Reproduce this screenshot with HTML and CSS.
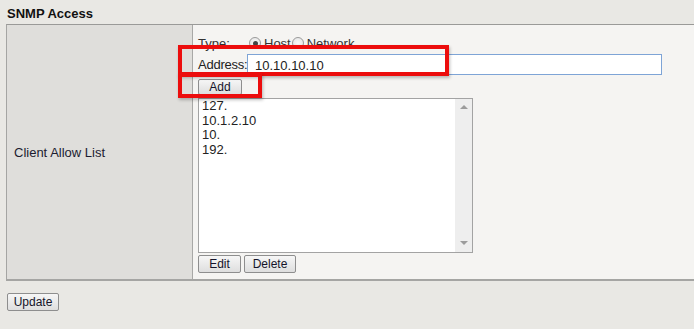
FILE: index.html
```html
<!DOCTYPE html>
<html>
<head>
<meta charset="utf-8">
<link rel="stylesheet" href="styles.css">
</head>
<body>
<div class="title">SNMP Access</div>
<div class="table">
  <div class="label-cell">Client Allow List</div>
  <div class="content-cell">
    <div class="type-row">
      <span class="type-label">Type:</span>
      <span class="radio checked"></span><span class="radio-text">Host</span>
      <span class="radio"></span><span class="radio-text">Network</span>
    </div>
    <div class="addr-row">
      <span class="addr-label">Address:</span>
      <div class="addr-input">10.10.10.10</div>
    </div>
    <div class="btn-row"><button class="btn btn-add">Add</button></div>
    <div class="listbox">
      <div class="list-items">
        <div>127.</div>
        <div>10.1.2.10</div>
        <div>10.</div>
        <div>192.</div>
      </div>
      <div class="scrollbar">
        <span class="arrow up"></span>
        <span class="arrow down"></span>
      </div>
    </div>
    <div class="btn-row gap">
      <button class="btn btn-edit">Edit</button>
      <button class="btn btn-delete">Delete</button>
    </div>
  </div>
</div>
<div class="footer"><button class="btn btn-update">Update</button></div>
<div class="mark mark-addr"></div>
<div class="mark mark-add"></div>
</body>
</html>
```

FILE: styles.css
```css
html, body {
  margin: 0;
  padding: 0;
}
body {
  background: #e9e8e4;
  font-family: "Liberation Sans", Arial, sans-serif;
  font-size: 13px;
  color: #1a1a2e;
  width: 694px;
  height: 329px;
  overflow: hidden;
  position: relative;
}
.title {
  font-weight: bold;
  font-size: 13px;
  color: #111;
  padding: 6px 0 0 7px;
  height: 18px;
  box-sizing: border-box;
}
.table {
  margin: 6px 0 0 6px;
  display: flex;
  border-top: 1px solid #9a9a98;
  border-bottom: 2px solid #a5a5a3;
  border-left: 1px solid #a5a5a3;
  width: 720px;
}
.label-cell {
  width: 186px;
  flex: none;
  box-sizing: border-box;
  background: #dfdedb;
  border-right: 1px solid #a8a8a6;
  display: flex;
  align-items: center;
  padding-left: 7px;
  color: #1c1c30;
}
.content-cell {
  flex: 1;
  background: #f5f4f2;
  padding: 9px 0 6px 5px;
}
.type-row {
  display: flex;
  align-items: center;
  height: 18px;
  color: #333;
}
.type-label {
  width: 51px;
  flex: none;
}
.radio {
  width: 12px;
  height: 12px;
  flex: none;
  border-radius: 50%;
  border: 1px solid #9a9a9a;
  background: radial-gradient(circle, #fafafa 0, #e2e2e2 100%);
  box-sizing: border-box;
  margin-right: 3px;
  position: relative;
}
.radio.checked::after {
  content: "";
  position: absolute;
  left: 2.5px;
  top: 2.5px;
  width: 5px;
  height: 5px;
  border-radius: 50%;
  background: #444;
}
.radio-text {
  margin-right: 1px;
}
.addr-row {
  display: flex;
  align-items: center;
  margin-top: 2px;
  height: 21px;
}
.addr-label {
  width: 49px;
  flex: none;
  white-space: nowrap;
  letter-spacing: -0.25px;
  color: #222;
}
.addr-input {
  width: 415px;
  flex: none;
  height: 21px;
  box-sizing: border-box;
  border: 1px solid #7ea4d6;
  background: #fff;
  padding: 3px 0 0 7px;
  color: #222;
}
.btn-row {
  display: flex;
  margin-top: 4px;
}
.btn-row.gap {
  margin-top: 2px;
  gap: 3px;
}
.btn {
  font-family: "Liberation Sans", Arial, sans-serif;
  font-size: 12px;
  color: #14142a;
  background: linear-gradient(#f6f6f6, #dedede);
  border: 1px solid #8e8e8e;
  border-radius: 2px;
  padding: 0;
  margin: 0;
  box-sizing: border-box;
}
.btn-add {
  width: 44px;
  height: 16px;
  line-height: 13px;
}
.btn-edit {
  width: 43px;
  height: 18px;
}
.btn-delete {
  width: 52px;
  height: 18px;
}
.listbox {
  margin-top: 3px;
  width: 275px;
  height: 155px;
  box-sizing: border-box;
  border: 1px solid #a3a3a3;
  background: #fff;
  display: flex;
}
.list-items {
  flex: 1;
  padding: 0 0 0 3px;
  line-height: 14.5px;
  color: #222;
}
.scrollbar {
  width: 17px;
  background: #eeeeee;
  position: relative;
}
.arrow {
  position: absolute;
  left: 5px;
  width: 0;
  height: 0;
  border-left: 4px solid transparent;
  border-right: 4px solid transparent;
}
.arrow.up {
  top: 6px;
  border-bottom: 4px solid #9c9c9c;
}
.arrow.down {
  bottom: 7px;
  border-top: 4px solid #9c9c9c;
}
.footer {
  padding: 12px 0 0 7px;
}
.btn-update {
  width: 52px;
  height: 18px;
}
.mark {
  position: absolute;
  border: 4px solid #ec0d0d;
  box-shadow: 1px 2px 3px rgba(0,0,0,0.25);
  box-sizing: border-box;
}
.mark-addr {
  left: 178px;
  top: 45px;
  width: 271px;
  height: 31px;
}
.mark-add {
  left: 178px;
  top: 73px;
  width: 84px;
  height: 25px;
}
```
